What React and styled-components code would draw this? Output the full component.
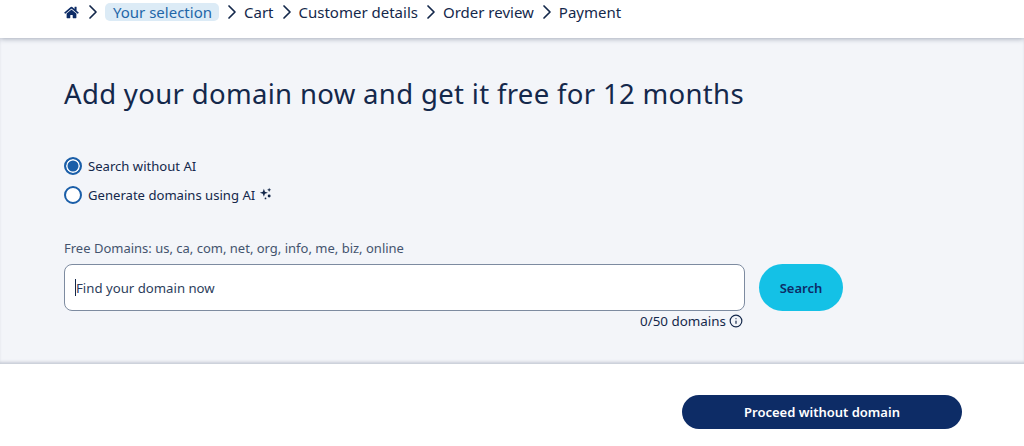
import React from 'react';
import styled, { createGlobalStyle } from 'styled-components';
import { FaHome } from 'react-icons/fa';
import { ChevronRight, Info } from 'lucide-react';

const GlobalStyle = createGlobalStyle`
  html, body {
    margin: 0;
    padding: 0;
    background: #fff;
    font-family: "Noto Sans", "Open Sans", sans-serif;
    color: #14284b;
    overflow: hidden;
  }
  * {
    box-sizing: border-box;
  }
`;

const Page = styled.div`
  width: 1024px;
  height: 446px;
  display: flex;
  flex-direction: column;
`;

const Header = styled.header`
  height: 38px;
  padding: 0 0 14px 64px;
  display: flex;
  align-items: center;
  background: #fff;
  position: relative;
  box-shadow: 0 1px 5px rgba(70, 85, 110, 0.45);
`;

const Crumb = styled.span`
  font-size: 15px;
  line-height: 18px;
  padding: ${props => (props.$active ? '0 7px 0 8px' : '0')};
  border-radius: 5px;
  color: ${props => (props.$active ? '#1f66a8' : '#14284b')};
  background: ${props => (props.$active ? '#dcebf6' : 'transparent')};
`;

const Separator = styled(ChevronRight)`
  width: 24px;
  height: 24px;
  margin-left: 1px;
  color: #14284b;
  stroke-width: 1.7;
  flex-shrink: 0;
`;

const HomeIcon = styled(FaHome)`
  width: 15px;
  height: 13px;
  margin-right: 1px;
  color: #0d2c66;
`;

const Main = styled.main`
  height: 326px;
  padding: 40px 0 0 64px;
  background: #f3f5f9;
  box-shadow: inset 0 -3px 3px -1px rgba(70, 85, 110, 0.25);
`;

const Title = styled.h1`
  margin: 0;
  font-family: "Noto Sans", sans-serif;
  font-size: 27.5px;
  line-height: 32px;
  font-weight: 400;
  letter-spacing: 0.33px;
  color: #14284b;
`;

const Options = styled.div`
  margin-top: 46px;
  display: flex;
  flex-direction: column;
  gap: 9px;
`;

const Option = styled.label`
  display: flex;
  align-items: center;
  gap: 6px;
  height: 20px;
  font-size: 13.1px;
  color: #14284b;
`;

const Radio = styled.span`
  width: 18px;
  height: 18px;
  border-radius: 50%;
  border: 2px solid #1a5ea8;
  background: ${props => (props.$checked ? '#1a5ea8' : '#fff')};
  box-shadow: ${props => (props.$checked ? 'inset 0 0 0 1.5px #fff' : 'none')};
  flex-shrink: 0;
`;

const Sparkle = styled.svg`
  width: 13px;
  height: 13px;
  margin: -3px 0 0 -2px;
  color: #14284b;
`;

const Hint = styled.div`
  margin-top: 34px;
  font-size: 13px;
  line-height: 18px;
  color: #44546e;
`;

const SearchRow = styled.div`
  margin-top: 7px;
  display: flex;
  align-items: flex-start;
  gap: 14px;
`;

const FieldColumn = styled.div`
  width: 681px;
  display: flex;
  flex-direction: column;
`;

const Field = styled.div`
  height: 47px;
  padding-left: 10px;
  display: flex;
  align-items: center;
  border: 1px solid #7d8ba0;
  border-radius: 8px;
  background: #fff;
  font-size: 13.2px;
  color: #2c3d5b;
`;

const Caret = styled.span`
  width: 1px;
  height: 17px;
  background: #14284b;
`;

const Counter = styled.div`
  margin-top: 1px;
  padding-right: 2px;
  display: flex;
  justify-content: flex-end;
  align-items: center;
  gap: 3px;
  font-size: 13.4px;
  line-height: 18px;
  color: #14284b;
`;

const InfoIcon = styled(Info)`
  width: 14px;
  height: 14px;
`;

const SearchButton = styled.button`
  width: 84px;
  height: 47px;
  border: none;
  border-radius: 24px;
  background: #14c1e6;
  color: #0d2c66;
  font-family: inherit;
  font-size: 13px;
  font-weight: 600;
`;

const Footer = styled.footer`
  flex: 1;
  padding: 31px 62px 0 0;
  display: flex;
  justify-content: flex-end;
  align-items: flex-start;
  background: #fff;
`;

const ProceedButton = styled.button`
  width: 280px;
  height: 34px;
  border: none;
  border-radius: 17px;
  background: #0d2c66;
  color: #fff;
  font-family: inherit;
  font-size: 13px;
  font-weight: 600;
`;

const steps = ['Cart', 'Customer details', 'Order review', 'Payment'];

const App = () => (
  <>
    <GlobalStyle />
    <Page>
      <Header>
        <HomeIcon />
        <Separator />
        <Crumb $active>Your selection</Crumb>
        {steps.map(step => (
          <React.Fragment key={step}>
            <Separator />
            <Crumb>{step}</Crumb>
          </React.Fragment>
        ))}
      </Header>
      <Main>
        <Title>Add your domain now and get it free for 12 months</Title>
        <Options>
          <Option>
            <Radio $checked />
            Search without AI
          </Option>
          <Option>
            <Radio />
            Generate domains using AI
            <Sparkle viewBox="0 0 16 16" fill="currentColor">
              <path d="M6 2l1.3 3.7L11 7 7.3 8.3 6 12 4.7 8.3 1 7l3.7-1.3z" />
              <path d="M12.5 1l.7 1.8 1.8.7-1.8.7-.7 1.8-.7-1.8L10 3.500l1.800-.7z" />
              <circle cx="12.500" cy="11" r="1.800" />
              <circle cx="8" cy="14" r="1.100" />
            </Sparkle>
          </Option>
        </Options>
        <Hint>Free Domains: us, ca, com, net, org, info, me, biz, online</Hint>
        <SearchRow>
          <FieldColumn>
            <Field>
              <Caret />
              Find your domain now
            </Field>
            <Counter>
              0/50 domains
              <InfoIcon />
            </Counter>
          </FieldColumn>
          <SearchButton>Search</SearchButton>
        </SearchRow>
      </Main>
      <Footer>
        <ProceedButton>Proceed without domain</ProceedButton>
      </Footer>
    </Page>
  </>
);

export default App;
